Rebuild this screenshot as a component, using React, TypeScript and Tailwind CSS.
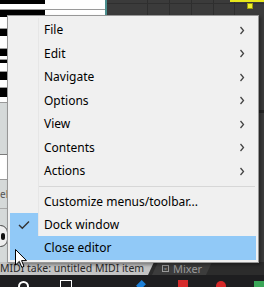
import { Fragment } from "react";

type Item = { label: string; sub?: boolean; checked?: boolean; active?: boolean; h: string };

const topItems: Item[] = [
  { label: "File", sub: true, h: "h-[24px]" },
  { label: "Edit", sub: true, h: "h-[23px]" },
  { label: "Navigate", sub: true, h: "h-[24px]" },
  { label: "Options", sub: true, h: "h-[23px]" },
  { label: "View", sub: true, h: "h-[24px]" },
  { label: "Contents", sub: true, h: "h-[23px]" },
  { label: "Actions", sub: true, h: "h-[24px]" },
];

const bottomItems: Item[] = [
  { label: "Customize menus/toolbar...", h: "h-[23px]" },
  { label: "Dock window", checked: true, h: "h-[23px]" },
  { label: "Close editor", active: true, h: "h-[24px]" },
];

// piano keys column, top to bottom
const keys: { h: string; black: boolean }[] = [
  { h: "h-[4px]", black: true },
  { h: "h-[6px]", black: false },
  { h: "h-[7px]", black: true },
  { h: "h-[12px]", black: false },
  { h: "h-[7px]", black: true },
  { h: "h-[13px]", black: false },
  { h: "h-[7px]", black: true },
  { h: "h-[4px]", black: false },
  { h: "h-[3px]", black: true },
  { h: "h-[9px]", black: false },
  { h: "h-[8px]", black: true },
  { h: "h-[8px]", black: false },
  { h: "h-[9px]", black: true },
  { h: "h-[6px]", black: false },
];

function Chevron() {
  return (
    <svg width="6" height="9" viewBox="0 0 6 9" className="shrink-0">
      <path d="M1.5 1 L4.5 4.5 L1.5 8" fill="none" stroke="#444" strokeWidth="1.3" />
    </svg>
  );
}

function MenuRow({ item }: { item: Item }) {
  return (
    <div
      className={`relative flex items-center pl-[34px] pr-[11px] ${item.h} ${
        item.active ? "bg-[#91c9f7]" : ""
      }`}
    >
      {item.checked && (
        <div className="absolute left-0 top-0 bottom-0 w-[28px] bg-[#91c9f7] flex items-center justify-center">
          <svg width="12" height="10" viewBox="0 0 12 10">
            <path d="M1 5 L4.3 8.3 L11 1.5" fill="none" stroke="#333" strokeWidth="1.4" />
          </svg>
        </div>
      )}
      <span className="flex-1 text-[12px] leading-none text-black">{item.label}</span>
      {item.sub && <Chevron />}
    </div>
  );
}

function ContextMenu() {
  return (
    <div className="absolute left-[7px] top-[15px] w-[252px] h-[248px] bg-[#f0f0f0] border border-[#979797] p-[2px] shadow-[2px_2px_3px_rgba(0,0,0,0.35)]">
      <div className="absolute left-[30px] top-[2px] bottom-[2px] w-[1px] bg-[#e6e6e6]" />
      <div className="relative flex flex-col">
        {topItems.map((it) => (
          <MenuRow key={it.label} item={it} />
        ))}
        <div className="h-[7px] flex items-center pl-[29px] pr-[1px]">
          <div className="w-full h-[1px] bg-[#d7d7d7]" />
        </div>
        {bottomItems.map((it) => (
          <Fragment key={it.label}>
            <MenuRow item={it} />
          </Fragment>
        ))}
      </div>
    </div>
  );
}

function Cursor() {
  return (
    <svg className="absolute left-[15px] top-[249px]" width="12" height="20" viewBox="0 0 12 20">
      <path
        d="M0.5 0.5 L0.5 16 L4.3 12.4 L6.8 18.3 L9 17.4 L6.6 11.6 L11.5 11.6 Z"
        fill="#fff"
        stroke="#000"
        strokeWidth="1"
        strokeLinejoin="round"
      />
    </svg>
  );
}

export default function App() {
  return (
    <div className="relative w-[264px] h-[287px] overflow-hidden bg-[#3a3a3a] font-['Noto_Sans',sans-serif]">
      <div className="flex flex-col h-full">
        {/* editor area */}
        <div className="flex h-[262px]">
          <div className="w-[105px] flex flex-col">
            <div className="flex flex-col bg-white">
              {keys.map((k, i) =>
                k.black ? (
                  <div key={i} className={`${k.h} flex`}>
                    <div className="w-[45px] bg-black" />
                    <div className="flex-1 bg-white" />
                  </div>
                ) : (
                  <div key={i} className={`${k.h} border-b border-[#9a9a9a] bg-white`} />
                )
              )}
            </div>
            <div className="flex-1 flex flex-col bg-[#d5d9d9]">
              <div className="h-[52px] border-b border-[#7b7b7b]" />
              <div className="h-[25px] bg-white border-b border-[#9a9a9a]" />
              <div className="h-[29px] border-b border-[#a8a8a8] flex items-center">
                <span className="text-[10px] leading-none text-[#555]">el</span>
              </div>
              <div className="flex-1 flex items-start pt-[16px]">
                <div className="-ml-[7px] w-[15px] h-[22px] rounded-full bg-[#eeeeee] border border-[#444] flex items-center justify-end pr-[2px]">
                  <div className="w-[4px] h-[7px] rounded-full bg-[#111]" />
                </div>
              </div>
            </div>
          </div>
          <div className="w-[2px] bg-[#4b8f8f]" />
          <div className="relative flex-1 bg-[#3b3b3b]">
            <div className="flex h-full">
              <div className="w-[41px] border-r border-[#2e2e2e]" />
              <div className="w-[22px] border-r border-[#2e2e2e]" />
              <div className="w-[22px] border-r border-[#2e2e2e]" />
              <div className="w-[22px] border-r border-[#2e2e2e]" />
              <div className="w-[21px] border-r border-[#2e2e2e]" />
              <div className="flex-1" />
            </div>
            <div className="absolute left-0 right-0 top-[3px] h-[1px] bg-[#2f2f2f]" />
            <div className="absolute left-[123px] right-0 top-0 h-[2px] bg-[#e8e81c]" />
            <div className="absolute left-[140px] top-[3px] w-[6px] h-[6px] bg-[#f2f22a] border border-[#9a9a10]" />
            <div className="absolute right-0 top-[110px] w-[6px] h-[3px] bg-[#262626]" />
          </div>
        </div>
        {/* tabs */}
        <div className="flex h-[13px] bg-[#2c2c2c]">
          <div className="w-[154px] bg-[#c3c3c3] [clip-path:polygon(0_0,100%_0,calc(100%-6px)_100%,0_100%)] flex items-center">
            <span className="text-[10.5px] leading-none text-[#2a2a2a] whitespace-nowrap">MIDI take: untitled MIDI item</span>
          </div>
          <div className="-ml-[2px] w-[60px] bg-[#3c3c3c] [clip-path:polygon(6px_0,100%_0,calc(100%-6px)_100%,0_100%)] flex items-center pl-[10px] gap-[4px]">
            <div className="w-[7px] h-[7px] border border-[#9a9a9a] flex items-center justify-center text-[6px] leading-none text-[#9a9a9a]">×</div>
            <span className="text-[11px] leading-none text-[#9a9a9a]">Mixer</span>
          </div>
        </div>
        {/* taskbar */}
        <div className="relative flex-1 bg-[#1e1e20]">
          <div className="absolute left-[18px] top-[6px] w-[11px] h-[11px] rounded-full border-2 border-white" />
          <div className="absolute left-[60px] top-[5px] w-[12px] h-[10px] border border-white" />
          <div className="absolute left-[138px] top-[6px] w-[6px] h-[8px] rotate-45 bg-[#1b7fd8]" />
          <div className="absolute left-[178px] top-[5px] w-[10px] h-[8px] bg-[#d52b2b]" />
          <div className="absolute left-[216px] top-[6px] w-[10px] h-[10px] rounded-full bg-[#d62828]" />
          <div className="absolute left-[254px] top-[6px] w-[10px] h-[8px] bg-[#3aa657]" />
        </div>
      </div>
      <ContextMenu />
      <Cursor />
    </div>
  );
}
